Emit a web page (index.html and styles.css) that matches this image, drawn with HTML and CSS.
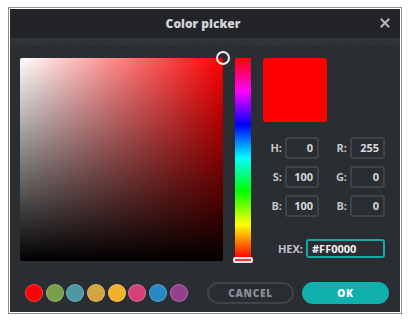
FILE: index.html
```html
<!DOCTYPE html>
<html lang="en">

<head>
    <meta charset="UTF-8">
    <title>Color picker</title>
    <link rel="stylesheet" href="styles.css">
</head>

<body>
    <div class="frame">
        <div class="dialog">
            <div class="header">
                <span class="title">Color picker</span>
                <svg class="close" width="10" height="10" viewBox="0 0 10 10">
                    <path d="M1.5 1.5 L8.5 8.5 M8.5 1.5 L1.5 8.5" stroke="#b4b6b9" stroke-width="2" stroke-linecap="square" />
                </svg>
            </div>
            <div class="hatch"></div>

            <div class="body">
                <div class="sv"><span class="sv-handle"></span></div>
                <div class="hue"><span class="hue-handle"></span></div>
                <div class="side">
                    <div class="preview"></div>
                    <div class="fields">
                        <span class="label">H:</span><span class="field">0</span>
                        <span class="label">R:</span><span class="field">255</span>
                        <span class="label">S:</span><span class="field">100</span>
                        <span class="label">G:</span><span class="field">0</span>
                        <span class="label">B:</span><span class="field">100</span>
                        <span class="label">B:</span><span class="field">0</span>
                    </div>
                    <div class="hex-row">
                        <span class="label">HEX:</span><span class="hex">#FF0000</span>
                    </div>
                </div>
            </div>

            <div class="footer">
                <div class="swatches">
                    <span class="swatch" style="background:#ff0000"></span>
                    <span class="swatch" style="background:#78a04a"></span>
                    <span class="swatch" style="background:#4d99a3"></span>
                    <span class="swatch" style="background:#d4a53e"></span>
                    <span class="swatch" style="background:#f2b12a"></span>
                    <span class="swatch" style="background:#d63f78"></span>
                    <span class="swatch" style="background:#2787c7"></span>
                    <span class="swatch" style="background:#963f8e"></span>
                </div>
                <div class="actions">
                    <button class="cancel">CANCEL</button>
                    <button class="ok">OK</button>
                </div>
            </div>
        </div>
    </div>
</body>

</html>
```

FILE: styles.css
```css
body {
    margin: 0;
    background: #fff;
    font-family: 'Open Sans', 'Liberation Sans', sans-serif;
}

.frame {
    margin: 7px 0 0 8px;
    width: 390px;
    border: 1px solid #8c8c8c;
    padding: 1px;
    background: #fff;
}

.dialog {
    background: #2a2d31;
    height: 303px;
    display: flex;
    flex-direction: column;
}

.header {
    height: 29px;
    background: #222428;
    display: grid;
    grid-template-columns: 1fr auto 1fr;
    align-items: center;
}

.title {
    grid-column: 2;
    font-size: 12px;
    font-weight: 800;
    color: #d3d5d8;
    margin-left: -4px;
}

.close {
    grid-column: 3;
    justify-self: end;
    margin-right: 10px;
    margin-top: -1px;
}

.hatch {
    height: 7px;
    background: repeating-linear-gradient(-45deg, #2b2e32 0 1.5px, #35383d 1.5px 3px);
}

.body {
    display: flex;
    gap: 12px;
    padding: 13px 0 0 10px;
}

.sv {
    position: relative;
    width: 203px;
    height: 203px;
    border-radius: 2px;
    background: linear-gradient(to top, #000, rgba(0, 0, 0, 0)), linear-gradient(to right, #fff, #f00);
}

.sv-handle {
    position: absolute;
    left: 196px;
    top: -7px;
    width: 10px;
    height: 10px;
    border: 2px solid #eee;
    border-radius: 50%;
}

.hue {
    position: relative;
    width: 16px;
    height: 200px;
    border-radius: 1px;
    background: linear-gradient(to bottom, #f00, #f0f, #00f, #0ff, #0f0, #ff0, #f00);
}

.hue-handle {
    position: absolute;
    left: -2px;
    top: 199px;
    width: 16px;
    height: 2px;
    border: 2px solid #e6e6e6;
    border-radius: 2px;
    background: #f33;
}

.side {
    width: 124px;
}

.preview {
    width: 64px;
    height: 64px;
    border-radius: 2px;
    background: #f00;
}

.fields {
    margin-top: 15px;
    display: grid;
    grid-template-columns: 22px 34px 31px 35px;
    row-gap: 7px;
}

.label {
    text-align: right;
    padding-right: 3px;
    font-size: 11px;
    font-weight: bold;
    line-height: 22px;
    color: #c3c5c8;
}

.field {
    box-sizing: border-box;
    height: 22px;
    border: 2px solid #404348;
    border-radius: 3px;
    padding-right: 4px;
    text-align: right;
    font-size: 11px;
    font-weight: bold;
    line-height: 18px;
    color: #d8dadc;
}

.hex-row {
    margin-top: 22px;
    display: grid;
    grid-template-columns: 43px 79px;
}

.hex-row .label {
    line-height: 19px;
}

.hex {
    box-sizing: border-box;
    height: 19px;
    border: 2px solid #17a8a8;
    border-radius: 3px;
    padding-left: 4px;
    font-size: 11px;
    font-weight: bold;
    line-height: 15px;
    color: #f2f2f2;
}

.footer {
    margin-top: 21px;
    display: flex;
    align-items: center;
    padding: 0 11px 0 15px;
}

.swatches {
    display: flex;
    gap: 2.67px;
}

.swatch {
    box-sizing: border-box;
    width: 18px;
    height: 18px;
    border-radius: 50%;
    border: 1px solid rgba(255, 255, 255, 0.25);
}

.actions {
    margin-left: auto;
    display: flex;
    gap: 8px;
}

button {
    width: 87px;
    height: 22px;
    border-radius: 11px;
    font-family: inherit;
    font-size: 10px;
    font-weight: 800;
    letter-spacing: 0.8px;
    cursor: pointer;
}

button.cancel {
    background: transparent;
    border: 2px solid #404348;
    color: #8d8f93;
}

button.ok {
    background: #10b0ae;
    border: none;
    color: #fff;
}
```
